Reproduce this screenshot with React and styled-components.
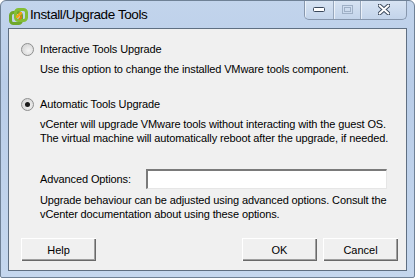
import React from 'react';
import styled, { createGlobalStyle } from 'styled-components';

const GlobalStyle = createGlobalStyle`
  html, body {
    margin: 0;
    padding: 0;
    background: #ffffff;
  }
  body {
    font-family: "Liberation Sans", Arial, sans-serif;
  }
`;

const Window = styled.div`
  width: 415px;
  height: 278px;
  box-sizing: border-box;
  display: flex;
  flex-direction: column;
  border: 1px solid #6f8196;
  border-radius: 6px 6px 2px 2px;
  background: linear-gradient(180deg, #c2d4ec 0%, #b9cde8 30%, #c5d7ee 100%);
  overflow: hidden;
`;

const TitleBar = styled.div`
  height: 27px;
  display: flex;
  align-items: flex-start;
  flex-shrink: 0;
`;

const Logo = styled.svg`
  width: 19px;
  height: 19px;
  margin: 6px 0 0 8px;
  flex-shrink: 0;
`;

const Title = styled.span`
  margin: 6px 0 0 2px;
  font-family: "Liberation Sans", Arial, sans-serif;
  font-size: 13.5px;
  letter-spacing: -0.4px;
  color: #000;
  flex: 1;
`;

const Caption = styled.div`
  display: flex;
  margin-top: -1px;
  margin-right: 7px;
  height: 19px;
  border: 1px solid #8797ad;
  border-top: none;
  border-radius: 0 0 5px 5px;
  overflow: hidden;
  background: linear-gradient(180deg, #d8e4f3 0%, #c3d4ea 100%);
`;

const CaptionButton = styled.div`
  width: ${(p) => p.$w}px;
  height: 19px;
  display: flex;
  align-items: center;
  justify-content: center;
  box-sizing: border-box;
  border-left: ${(p) => (p.$first ? 'none' : '1px solid #97a7bc')};
  box-shadow: inset 1px 1px 0 rgba(255, 255, 255, 0.6);
`;

const Client = styled.div`
  flex: 1;
  margin: 0 7px 6px 7px;
  border: 1px solid #5f6f82;
  background: #f0f0f0;
  display: flex;
  flex-direction: column;
  padding: 13px 8px 9px 12px;
  font-family: "Liberation Sans", Tahoma, sans-serif;
  font-size: 11px;
  letter-spacing: -0.12px;
  color: #000;
`;

const OptionRow = styled.label`
  display: flex;
  align-items: center;
  height: 14px;
  gap: 6px;
  margin-top: ${(p) => p.$top || 0}px;
`;

const Radio = styled.span`
  width: 13px;
  height: 13px;
  box-sizing: border-box;
  border-radius: 50%;
  border: 1px solid #8e8f8f;
  background: radial-gradient(circle at 60% 60%, #f4f4f4 0%, #dcdcdc 60%, #cfcfcf 100%);
  display: flex;
  align-items: center;
  justify-content: center;
  flex-shrink: 0;

  &::after {
    content: '';
    width: 5px;
    height: 5px;
    border-radius: 50%;
    background: ${(p) => (p.$checked ? '#1a1a1a' : 'transparent')};
  }
`;

const Desc = styled.p`
  margin: ${(p) => p.$top || 0}px 0 0 19px;
  line-height: 14px;
`;

const FieldRow = styled.div`
  display: flex;
  align-items: center;
  margin: 24px 0 0 19px;
`;

const FieldLabel = styled.span`
  width: 106px;
`;

const TextInput = styled.div`
  width: 241px;
  height: 20px;
  box-sizing: border-box;
  background: #fff;
  border-top: 2px solid #7a7a7a;
  border-left: 2px solid #7a7a7a;
  border-right: 1px solid #e6e6e6;
  border-bottom: 1px solid #e6e6e6;
`;

const ButtonRow = styled.div`
  display: flex;
  margin-top: auto;
  gap: 6px;
`;

const Spacer = styled.div`
  flex: 1;
`;

const Button = styled.button`
  width: 75px;
  height: 23px;
  box-sizing: border-box;
  background: #f0f0f0;
  font-family: "Liberation Sans", Tahoma, sans-serif;
  font-size: 11px;
  color: #000;
  border: none;
  box-shadow: inset 1px 1px 0 #ffffff, inset -1px -1px 0 #696969,
    inset -2px -2px 0 #a0a0a0;
  padding: 0;
`;

const MinGlyph = () => (
  <svg width="12" height="5" viewBox="0 0 12 5">
    <rect x="0.5" y="0.5" width="11" height="4" rx="1" fill="#fff" stroke="#39475a" />
  </svg>
);

const MaxGlyph = () => (
  <svg width="11" height="9" viewBox="0 0 11 9">
    <rect x="0.5" y="0.5" width="10" height="8" fill="none" stroke="#9fb0c6" />
    <rect x="2.5" y="2.5" width="6" height="4" fill="none" stroke="#9fb0c6" />
  </svg>
);

const CloseGlyph = () => (
  <svg width="12" height="11" viewBox="0 0 12 11">
    <path
      d="M1 1 L11 10 M11 1 L1 10"
      stroke="#3c4a5d"
      strokeWidth="4"
      strokeLinecap="square"
    />
    <path d="M1 1 L11 10 M11 1 L1 10" stroke="#ffffff" strokeWidth="2" />
  </svg>
);

const App = () => {
  return (
    <>
      <GlobalStyle />
      <Window>
        <TitleBar>
          <Logo viewBox="0 0 19 19">
            <rect x="1.5" y="5.5" width="11" height="11" rx="3" fill="none" stroke="#6fa82c" strokeWidth="3" />
            <rect x="6.5" y="2.5" width="11" height="11" rx="3" fill="none" stroke="#84be35" strokeWidth="3" />
            <path d="M7 9 L11 5 L13 5 L13 7 L9 11 L7 11 Z" fill="#f1a417" />
            <path d="M9 12 L13 8 L13 11 L11 13 Z" fill="#e07c12" />
          </Logo>
          <Title>Install/Upgrade Tools</Title>
          <Caption>
            <CaptionButton $w={28} $first>
              <MinGlyph />
            </CaptionButton>
            <CaptionButton $w={27}>
              <MaxGlyph />
            </CaptionButton>
            <CaptionButton $w={46}>
              <CloseGlyph />
            </CaptionButton>
          </Caption>
        </TitleBar>
        <Client>
          <OptionRow>
            <Radio />
            Interactive Tools Upgrade
          </OptionRow>
          <Desc $top={6}>
            Use this option to change the installed VMware tools component.
          </Desc>
          <OptionRow $top={21}>
            <Radio $checked />
            Automatic Tools Upgrade
          </OptionRow>
          <Desc $top={6}>
            vCenter will upgrade VMware tools without interacting with the guest OS.
            <br />
            The virtual machine will automatically reboot after the upgrade, if needed.
          </Desc>
          <FieldRow>
            <FieldLabel>Advanced Options:</FieldLabel>
            <TextInput />
          </FieldRow>
          <Desc $top={4}>
            Upgrade behaviour can be adjusted using advanced options. Consult the
            <br />
            vCenter documentation about using these options.
          </Desc>
          <ButtonRow>
            <Button>Help</Button>
            <Spacer />
            <Button>OK</Button>
            <Button>Cancel</Button>
          </ButtonRow>
        </Client>
      </Window>
    </>
  );
};

export default App;
